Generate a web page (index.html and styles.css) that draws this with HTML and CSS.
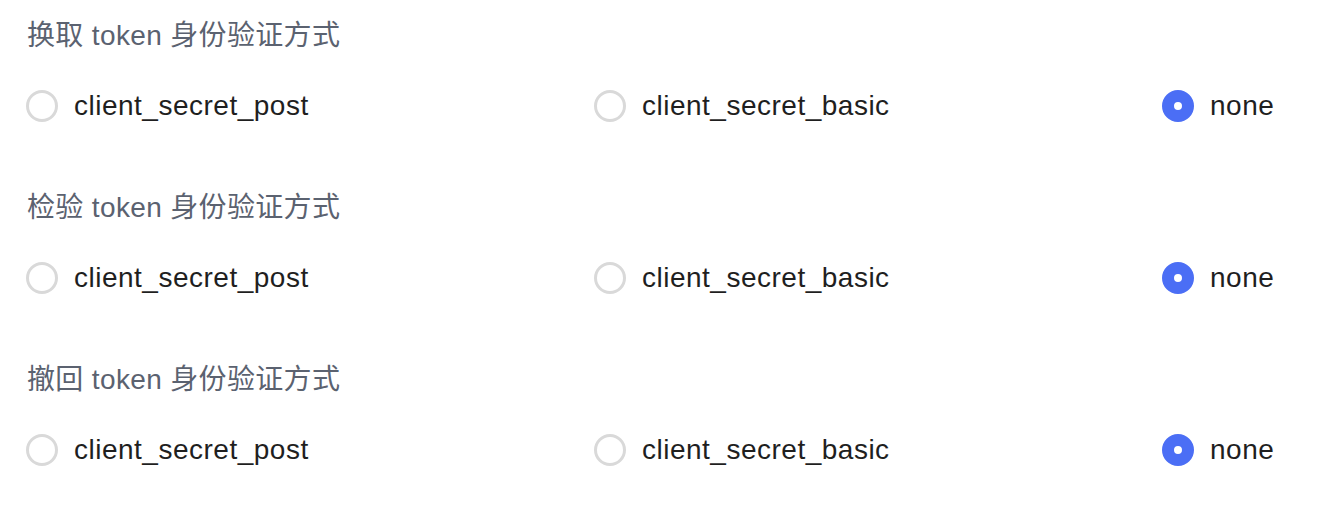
FILE: index.html
```html
<!DOCTYPE html>
<html lang="zh-CN">
<head>
<meta charset="utf-8">
<link rel="stylesheet" href="styles.css">
</head>
<body>
<div class="form">
  <div class="field">
    <div class="label">换取 token 身份验证方式</div>
    <div class="group">
      <label class="radio"><span class="dot"></span><span class="text">client_secret_post</span></label>
      <label class="radio"><span class="dot"></span><span class="text">client_secret_basic</span></label>
      <label class="radio checked"><span class="dot"></span><span class="text">none</span></label>
    </div>
  </div>
  <div class="field">
    <div class="label">检验 token 身份验证方式</div>
    <div class="group">
      <label class="radio"><span class="dot"></span><span class="text">client_secret_post</span></label>
      <label class="radio"><span class="dot"></span><span class="text">client_secret_basic</span></label>
      <label class="radio checked"><span class="dot"></span><span class="text">none</span></label>
    </div>
  </div>
  <div class="field">
    <div class="label">撤回 token 身份验证方式</div>
    <div class="group">
      <label class="radio"><span class="dot"></span><span class="text">client_secret_post</span></label>
      <label class="radio"><span class="dot"></span><span class="text">client_secret_basic</span></label>
      <label class="radio checked"><span class="dot"></span><span class="text">none</span></label>
    </div>
  </div>
</div>
</body>
</html>
```
FILE: styles.css
```css
html, body {
  margin: 0;
  padding: 0;
  background: #ffffff;
}
body {
  font-family: "Liberation Sans", "Noto Sans CJK SC", sans-serif;
}
.form {
  padding: 16px 0 0 26px;
}
.field {
  margin-bottom: 62px;
}
.label {
  font-size: 28px;
  line-height: 40px;
  height: 40px;
  color: #5b6270;
  padding-left: 1px;
  letter-spacing: 0.35px;
}
.group {
  margin-top: 30px;
  display: grid;
  grid-template-columns: 568px 568px auto;
}
.radio {
  display: flex;
  align-items: center;
  height: 40px;
  gap: 16px;
}
.dot {
  box-sizing: border-box;
  width: 32px;
  height: 32px;
  border-radius: 50%;
  border: 3px solid #d9d9d9;
  background: #fff;
  flex: none;
}
.radio.checked .dot {
  border: 12px solid #4b6ef5;
  background: #fff;
}
.text {
  font-size: 28px;
  line-height: 40px;
  color: #1f1f1f;
  letter-spacing: 0.5px;
}
```
